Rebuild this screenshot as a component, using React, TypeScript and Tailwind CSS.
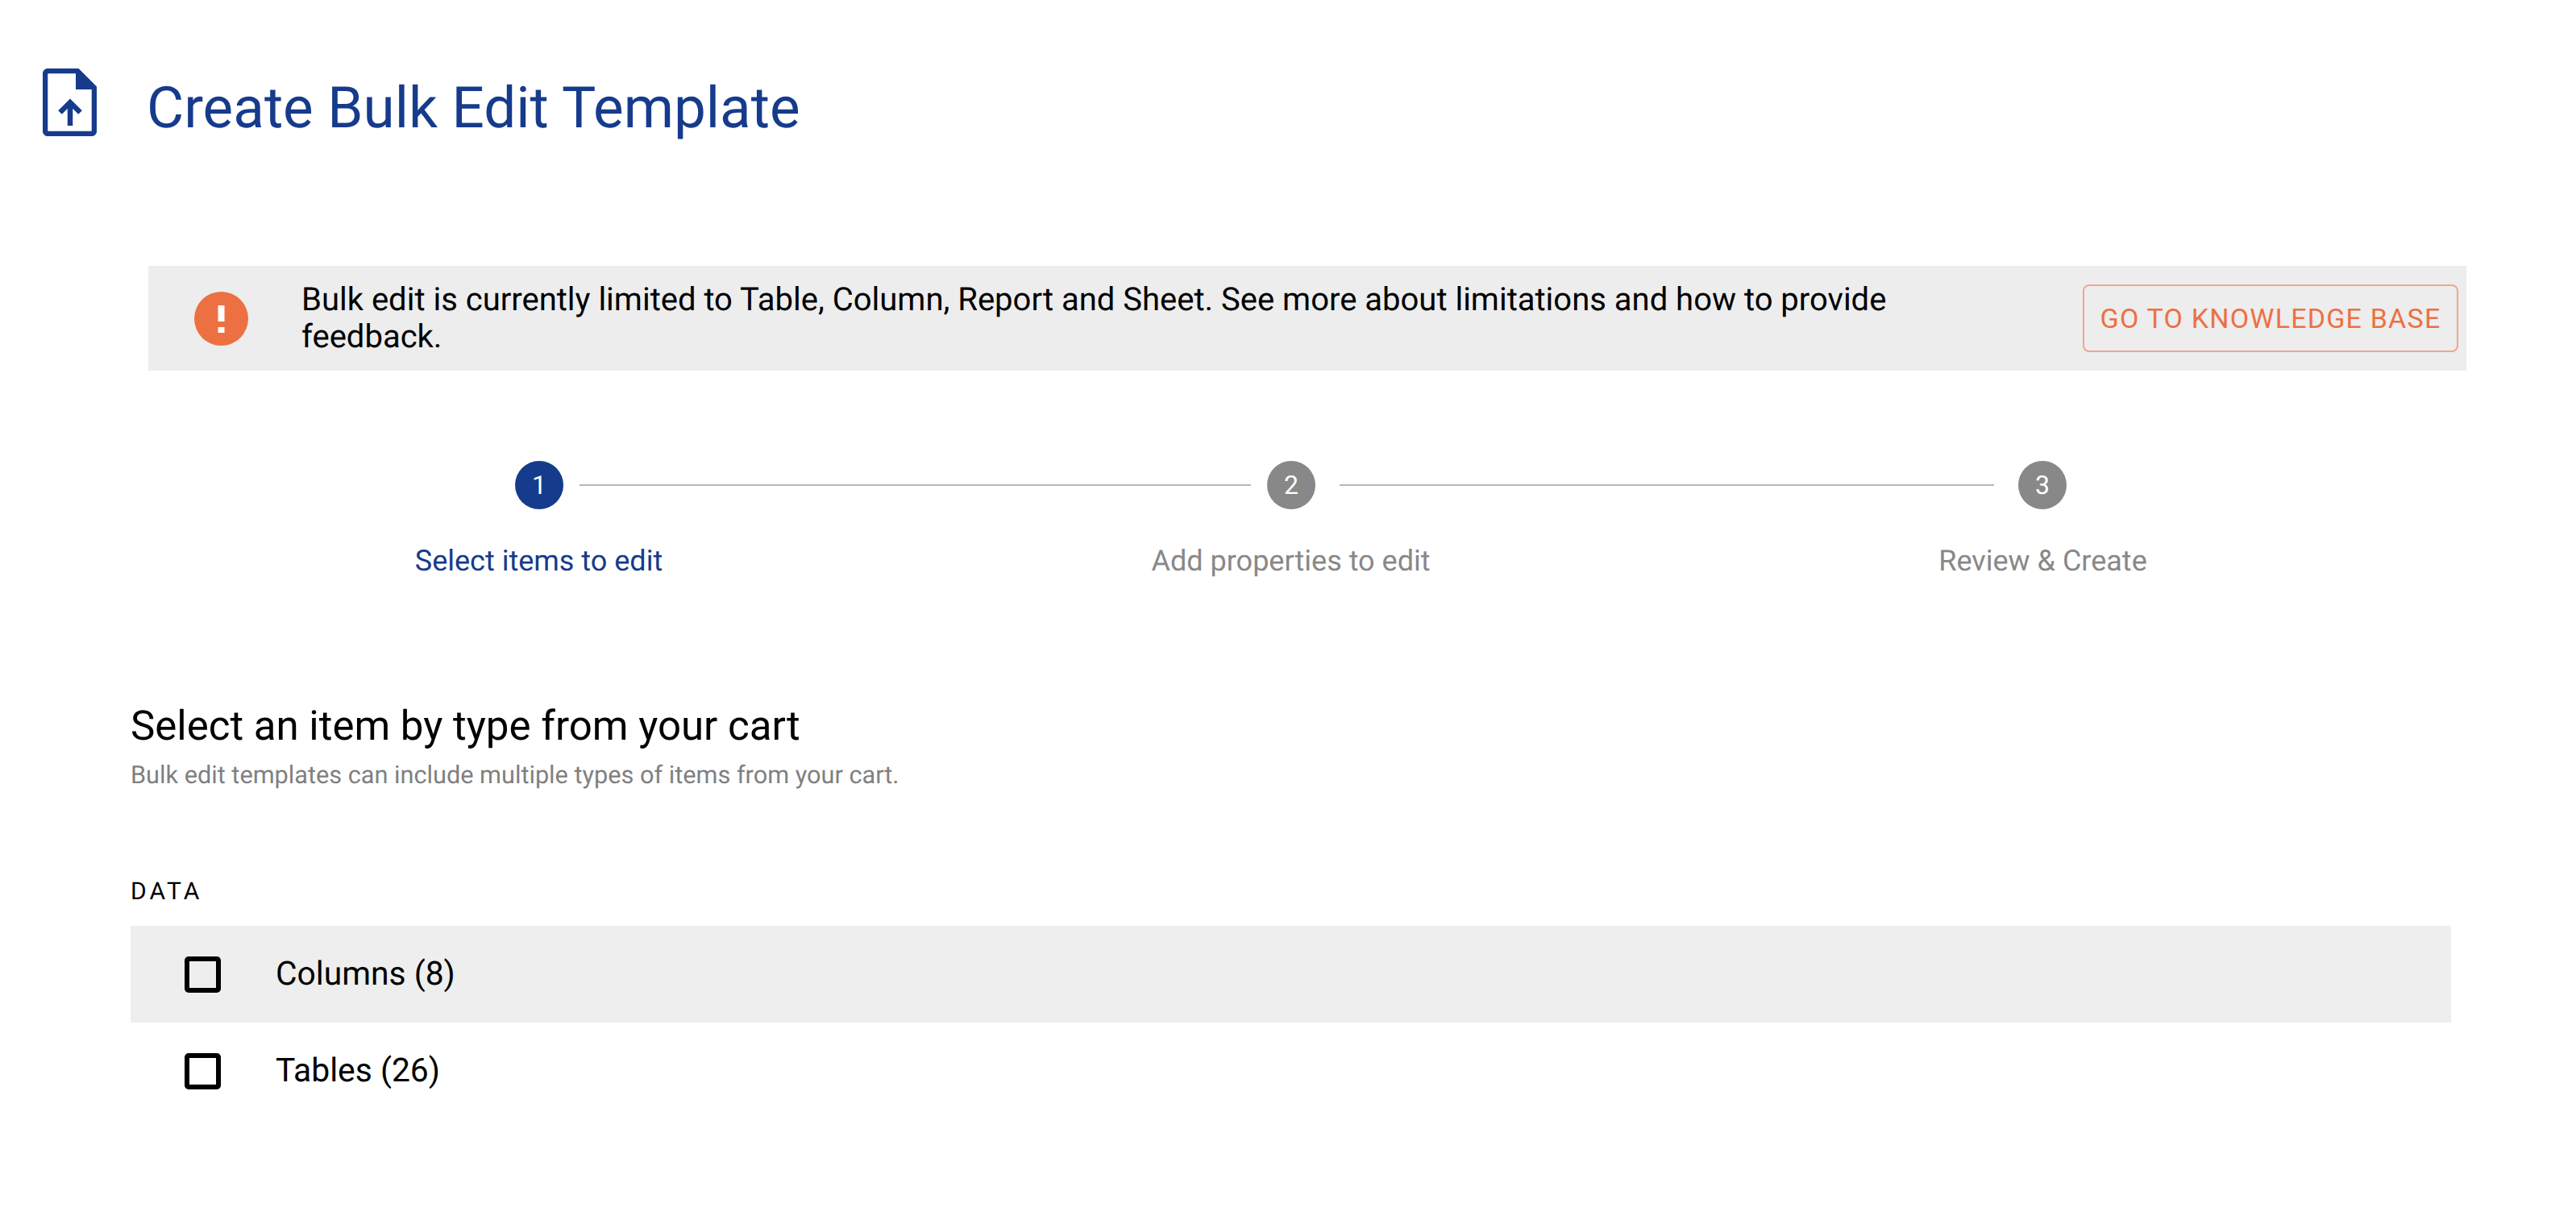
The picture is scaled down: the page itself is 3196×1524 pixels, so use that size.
const steps = [
  { label: 'Select items to edit', active: true },
  { label: 'Add properties to edit', active: false },
  { label: 'Review & Create', active: false },
];

const items = [
  { label: 'Columns (8)', hovered: true },
  { label: 'Tables (26)', hovered: false },
];

function FileUploadIcon() {
  return (
    <svg width="67" height="84" viewBox="0 0 67 84" fill="none" className="shrink-0">
      <path d="M7 3H43L64 24V77A4 4 0 0 1 60 81H7A4 4 0 0 1 3 77V7A4 4 0 0 1 7 3Z" stroke="#163b8c" strokeWidth="6.5" strokeLinejoin="round" />
      <path d="M41 3H43L64 24V26H41Z" fill="#163b8c" />
      <path d="M34 71V43M21.5 54.5L34 42L46.5 54.5" stroke="#163b8c" strokeWidth="6.5" />
    </svg>
  );
}

function AlertIcon() {
  return (
    <svg width="67" height="67" viewBox="0 0 67 67" className="ml-[57px] shrink-0">
      <circle cx="33.5" cy="33.5" r="33.5" fill="#ed7043" />
      <rect x="29.5" y="17" width="8" height="20" fill="#ffffff" />
      <rect x="29.5" y="44" width="8" height="7" fill="#ffffff" />
    </svg>
  );
}

export default function App() {
  return (
    <div className="min-h-[1524px] bg-white font-['Roboto',sans-serif] text-black [text-rendering:geometricPrecision]">
      <div className="flex items-start pl-[53px] pt-[85px]">
        <FileUploadIcon />
        <h1 className="ml-[62px] mt-[8px] text-[71px] leading-[84px] text-[#163b8c]">Create Bulk Edit Template</h1>
      </div>

      <div className="ml-[184px] mt-[153px] flex h-[130px] w-[2876px] items-center bg-[#ededed]">
        <AlertIcon />
        <p className="ml-[66px] w-[2020px] text-[40px] leading-[46px]">
          Bulk edit is currently limited to Table, Column, Report and Sheet. See more about limitations and how to provide feedback.
        </p>
        <button className="ml-auto mr-[10px] h-[84px] w-[466px] rounded-[8px] border-2 border-[#eea78e] text-[34px] tracking-[1.2px] text-[#ed7043]">
          GO TO KNOWLEDGE BASE
        </button>
      </div>

      <div className="ml-[202px] mt-[112px] w-[2799px]">
        <div className="flex items-center pl-[437px]">
          <div className="flex h-[60px] w-[60px] items-center justify-center rounded-full bg-[#163b8c] text-[32px] text-white">1</div>
          <div className="mx-[20px] h-[2px] w-[833px] bg-[#b8b8b8]" />
          <div className="flex h-[60px] w-[60px] items-center justify-center rounded-full bg-[#888888] text-[32px] text-white">2</div>
          <div className="mx-[30px] h-[2px] w-[812px] bg-[#b8b8b8]" />
          <div className="flex h-[60px] w-[60px] items-center justify-center rounded-full bg-[#888888] text-[32px] text-white">3</div>
        </div>
        <div className="mt-[42px] grid grid-cols-3">
          {steps.map((step) => (
            <div
              key={step.label}
              className={step.active ? 'text-center text-[36px] leading-[44px] text-[#163b8c]' : 'text-center text-[36px] leading-[44px] text-[#888888]'}
            >
              {step.label}
            </div>
          ))}
        </div>
      </div>

      <div className="ml-[162px] mt-[154px] w-[2879px]">
        <h2 className="text-[51px] leading-[60px]">Select an item by type from your cart</h2>
        <p className="mt-[13px] text-[30.7px] leading-[36px] text-[#808080]">Bulk edit templates can include multiple types of items from your cart.</p>
        <div className="mt-[108px] text-[30px] leading-[36px] tracking-[4px]">DATA</div>
        <div className="mt-[24px]">
          {items.map((item) => (
            <div key={item.label} className={item.hovered ? 'flex h-[120px] items-center bg-[#eeeeee]' : 'flex h-[120px] items-center'}>
              <div className="ml-[67px] h-[45px] w-[45px] rounded-[5px] border-[6px] border-black" />
              <span className="ml-[68px] text-[40.8px]">{item.label}</span>
            </div>
          ))}
        </div>
      </div>
    </div>
  );
}
